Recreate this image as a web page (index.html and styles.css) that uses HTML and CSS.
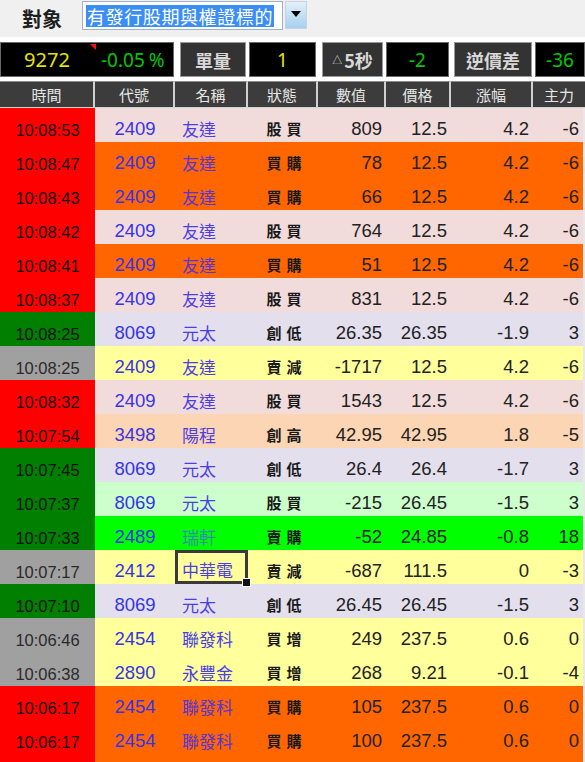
FILE: index.html
```html
<!DOCTYPE html>
<html lang="zh-Hant">
<head>
<meta charset="utf-8">
<title>對象</title>
<link rel="stylesheet" href="styles.css">
</head>
<body>
<div class="top">
  <div class="label">對象</div>
  <div class="select"><span class="sel-text">有發行股期與權證標的</span></div>
  <div class="drop"><svg width="10" height="6" viewBox="0 0 10 6"><path d="M0 0H10L5 6Z" fill="#000"/></svg></div>
</div>
<div class="bar">
  <div class="cell dark first"><span class="yel idx">9272</span><span class="grn pct">-0.05 %</span><span class="flag"></span></div>
  <div class="cell lab w66 g6">單量</div>
  <div class="cell dark w67 g3 yel">1</div>
  <div class="cell lab w61 g6"><span class="tri">△</span>5秒</div>
  <div class="cell dark w63 g3 grn">-2</div>
  <div class="cell lab w78 g5">逆價差</div>
  <div class="cell dark w50 g3 grn">-36</div>
</div>
<div class="grid head">
  <div>時間</div><div>代號</div><div>名稱</div><div>狀態</div><div>數值</div><div>價格</div><div>涨幅</div><div>主力</div>
</div>
<div class="rows" id="rows">
  <div class="grid row pink"><div class="t red">10:08:53</div><div class="c">2409</div><div class="n">友達</div><div class="s">股買</div><div class="v">809</div><div class="v">12.5</div><div class="v">4.2</div><div class="v">-6</div></div>
  <div class="grid row orange"><div class="t red">10:08:47</div><div class="c">2409</div><div class="n">友達</div><div class="s">買購</div><div class="v">78</div><div class="v">12.5</div><div class="v">4.2</div><div class="v">-6</div></div>
  <div class="grid row orange"><div class="t red">10:08:43</div><div class="c">2409</div><div class="n">友達</div><div class="s">買購</div><div class="v">66</div><div class="v">12.5</div><div class="v">4.2</div><div class="v">-6</div></div>
  <div class="grid row pink"><div class="t red">10:08:42</div><div class="c">2409</div><div class="n">友達</div><div class="s">股買</div><div class="v">764</div><div class="v">12.5</div><div class="v">4.2</div><div class="v">-6</div></div>
  <div class="grid row orange"><div class="t red">10:08:41</div><div class="c">2409</div><div class="n">友達</div><div class="s">買購</div><div class="v">51</div><div class="v">12.5</div><div class="v">4.2</div><div class="v">-6</div></div>
  <div class="grid row pink"><div class="t red">10:08:37</div><div class="c">2409</div><div class="n">友達</div><div class="s">股買</div><div class="v">831</div><div class="v">12.5</div><div class="v">4.2</div><div class="v">-6</div></div>
  <div class="grid row lav"><div class="t green">10:08:25</div><div class="c">8069</div><div class="n">元太</div><div class="s">創低</div><div class="v">26.35</div><div class="v">26.35</div><div class="v">-1.9</div><div class="v">3</div></div>
  <div class="grid row yellow"><div class="t gray">10:08:25</div><div class="c">2409</div><div class="n">友達</div><div class="s">賣減</div><div class="v">-1717</div><div class="v">12.5</div><div class="v">4.2</div><div class="v">-6</div></div>
  <div class="grid row pink"><div class="t red">10:08:32</div><div class="c">2409</div><div class="n">友達</div><div class="s">股買</div><div class="v">1543</div><div class="v">12.5</div><div class="v">4.2</div><div class="v">-6</div></div>
  <div class="grid row peach"><div class="t red">10:07:54</div><div class="c">3498</div><div class="n">陽程</div><div class="s">創高</div><div class="v">42.95</div><div class="v">42.95</div><div class="v">1.8</div><div class="v">-5</div></div>
  <div class="grid row lav"><div class="t green">10:07:45</div><div class="c">8069</div><div class="n">元太</div><div class="s">創低</div><div class="v">26.4</div><div class="v">26.4</div><div class="v">-1.7</div><div class="v">3</div></div>
  <div class="grid row mint"><div class="t green">10:07:37</div><div class="c">8069</div><div class="n">元太</div><div class="s">股買</div><div class="v">-215</div><div class="v">26.45</div><div class="v">-1.5</div><div class="v">3</div></div>
  <div class="grid row lime"><div class="t green">10:07:33</div><div class="c">2489</div><div class="n teal">瑞軒</div><div class="s">賣購</div><div class="v">-52</div><div class="v">24.85</div><div class="v">-0.8</div><div class="v">18</div></div>
  <div class="grid row yellow"><div class="t gray">10:07:17</div><div class="c">2412</div><div class="n selected">中華電<span class="handle"></span></div><div class="s">賣減</div><div class="v">-687</div><div class="v">111.5</div><div class="v">0</div><div class="v">-3</div></div>
  <div class="grid row lav"><div class="t green">10:07:10</div><div class="c">8069</div><div class="n">元太</div><div class="s">創低</div><div class="v">26.45</div><div class="v">26.45</div><div class="v">-1.5</div><div class="v">3</div></div>
  <div class="grid row yellow"><div class="t gray">10:06:46</div><div class="c">2454</div><div class="n">聯發科</div><div class="s">買增</div><div class="v">249</div><div class="v">237.5</div><div class="v">0.6</div><div class="v">0</div></div>
  <div class="grid row yellow"><div class="t gray">10:06:38</div><div class="c">2890</div><div class="n">永豐金</div><div class="s">買增</div><div class="v">268</div><div class="v">9.21</div><div class="v">-0.1</div><div class="v">-4</div></div>
  <div class="grid row orange"><div class="t red">10:06:17</div><div class="c">2454</div><div class="n">聯發科</div><div class="s">買購</div><div class="v">105</div><div class="v">237.5</div><div class="v">0.6</div><div class="v">0</div></div>
  <div class="grid row orange"><div class="t red">10:06:17</div><div class="c">2454</div><div class="n">聯發科</div><div class="s">買購</div><div class="v">100</div><div class="v">237.5</div><div class="v">0.6</div><div class="v">0</div></div>
  <div class="grid row orange"><div class="t red"></div><div class="c"></div><div class="n"></div><div class="s"></div><div class="v"></div><div class="v"></div><div class="v"></div><div class="v"></div></div>
</div>
</body>
</html>
```
FILE: styles.css
```css
html, body {
  margin: 0;
  padding: 0;
  background: #ffffff;
  font-family: "Liberation Sans", "Noto Sans CJK TC", Arial, sans-serif;
  overflow: hidden;
}

.top {
  height: 37px;
  background: #f0f0f0;
  display: flex;
  align-items: flex-start;
  margin-bottom: 5px;
}
.label {
  width: 60px;
  padding-left: 22px;
  padding-top: 7px;
  font-family: "Noto Sans CJK TC", sans-serif;
  font-size: 20px;
  font-weight: bold;
  line-height: 24px;
  color: #1e1e1e;
}
.select {
  margin-left: 0;
  margin-top: 1px;
  width: 196px;
  height: 27px;
  background: #fff;
  border: 1px solid #9fb3c8;
  display: flex;
  align-items: center;
  padding-left: 3px;
  box-sizing: content-box;
}
.sel-text {
  background: #3a8ef5;
  color: #fff;
  font-family: "Noto Sans CJK TC", sans-serif;
  font-size: 18px;
  line-height: 22px;
  padding: 0 1px;
  letter-spacing: 0.6px;
}
.drop {
  margin-left: 2px;
  margin-top: 1px;
  width: 22px;
  height: 28px;
  background: linear-gradient(#e3eff9, #a9cfee);
  border: 1px solid #c3d4e4;
  box-sizing: border-box;
  display: flex;
  justify-content: center;
  padding-top: 9px;
}
.drop svg { display: block; }

.bar {
  display: flex;
  height: 35px;
  margin-bottom: 4px;
}
.cell {
  box-sizing: border-box;
  height: 35px;
  display: flex;
  align-items: center;
  justify-content: center;
  font-family: "Noto Sans", "Liberation Sans", sans-serif;
  font-size: 19px;
  border: 1px solid #6a6a6a;
}
.dark { background: #000; }
.lab {
  background: #333333;
  color: #d8d8d8;
  font-family: "Noto Sans CJK TC", sans-serif;
  font-weight: bold;
  font-size: 18px;
  border-color: #9a9a9a;
}
.tri { font-size: 10px; margin-right: 2px; font-weight: normal; }
.first {
  width: 174px;
  position: relative;
  justify-content: flex-start;
}
.idx { width: 92px; text-align: center; font-size: 20px; }
.pct { margin-left: 8px; word-spacing: -1px; }
.flag {
  position: absolute;
  left: 89px;
  top: 1px;
  width: 0;
  height: 0;
  border-top: 6px solid #ff1010;
  border-left: 6px solid transparent;
}
.yel { color: #e4e400; }
.grn { color: #00c800; }
.w66 { width: 66px; }
.w67 { width: 67px; }
.w61 { width: 61px; }
.w63 { width: 63px; }
.w78 { width: 78px; }
.w50 { width: 50px; }
.g6 { margin-left: 6px; }
.g5 { margin-left: 5px; }
.g3 { margin-left: 3px; }

.grid {
  display: grid;
  grid-template-columns: 95px 80px 73px 70px 68px 65px 82px 52px;
}
.head {
  height: 27px;
  background: #ffffff;
}
.head > div {
  background: #3c3c3c;
  color: #e6e6e6;
  font-family: "Noto Sans CJK TC", sans-serif;
  font-size: 15px;
  display: flex;
  align-items: center;
  justify-content: center;
  border-right: 2px solid #d0d0d0;
  border-bottom: 1px solid #d0d0d0;
  border-top: 1px solid #8a8a8a;
}
.head > div:last-child { border-right: none; }

.row {
  height: 34px;
}
.row > div {
  display: flex;
  align-items: flex-end;
  padding-bottom: 2px;
  box-sizing: border-box;
  white-space: nowrap;
}
.t {
  justify-content: center;
  font-size: 16.5px;
  color: #111;
}
.red { background: #ff0000; }
.green { background: #007f00; }
.gray { background: #a0a0a0; color: #2a2a2a; }
.c {
  justify-content: center;
  color: #3535e6;
  font-size: 18.5px;
}
.n {
  padding-left: 7px;
  color: #4a3fe6;
  font-family: "Noto Sans CJK TC", sans-serif;
  font-size: 17px;
  line-height: 22px;
}
.orange .n { color: #5a35d0; }
.teal { color: #2f8fae !important; }
.s {
  justify-content: center;
  font-family: "Noto Sans CJK TC", sans-serif;
  font-weight: bold;
  font-size: 15px;
  letter-spacing: 5px;
  padding-left: 7px;
  color: #1a1a1a;
  line-height: 22px;
}
.v {
  justify-content: flex-end;
  padding-right: 4px;
  font-size: 18.5px;
  color: #222;
}
.rows .row > div:last-child { border-right: 2px solid #e8e8e8; }

.pink { background: #f2dcdb; }
.orange { background: #ff6600; }
.lav { background: #e4dfec; }
.yellow { background: #ffff9c; }
.peach { background: #fcd5b4; }
.mint { background: #ccffcc; }
.lime { background: #00ff00; }

.selected {
  position: relative;
  border: 3px solid #3a3a3a;
  padding-left: 4px;
  padding-bottom: 0 !important;
}
.handle {
  position: absolute;
  right: -6px;
  bottom: -6px;
  width: 7px;
  height: 7px;
  background: #111;
  border: 1px solid #fff;
}
```
